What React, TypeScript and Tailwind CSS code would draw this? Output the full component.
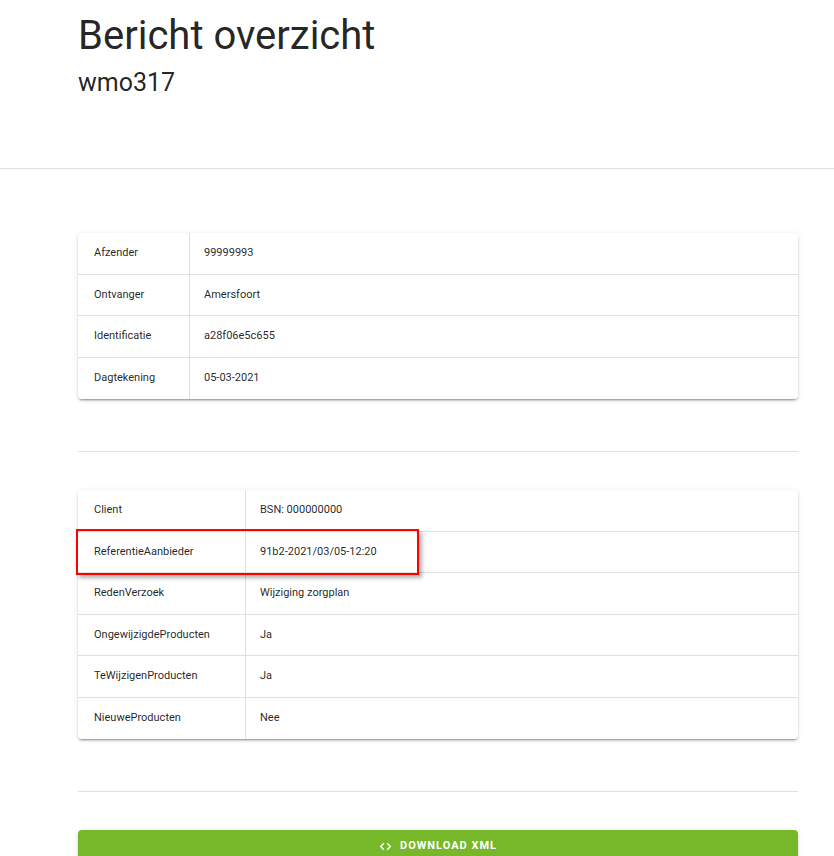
const header = [
  ['Afzender', '99999993'],
  ['Ontvanger', 'Amersfoort'],
  ['Identificatie', 'a28f06e5c655'],
  ['Dagtekening', '05-03-2021'],
];

const body = [
  ['Client', 'BSN: 000000000'],
  ['ReferentieAanbieder', '91b2-2021/03/05-12:20'],
  ['RedenVerzoek', 'Wijziging zorgplan'],
  ['OngewijzigdeProducten', 'Ja'],
  ['TeWijzigenProducten', 'Ja'],
  ['NieuweProducten', 'Nee'],
];

function InfoTable({ rows, labelWidth }: { rows: string[][]; labelWidth: string }) {
  return (
    <div className="bg-white rounded shadow-[0_3px_1px_-2px_rgba(0,0,0,0.2),0_2px_2px_0_rgba(0,0,0,0.14),0_1px_5px_0_rgba(0,0,0,0.12)]">
      {rows.map(([k, v], i) => (
        <div
          key={k}
          className={`flex h-[41.5px] text-[11px] text-black/[0.87] ${
            i < rows.length - 1 ? 'border-b border-black/[0.12]' : ''
          }`}
        >
          <div className={`${labelWidth} shrink-0 px-4 flex items-center border-r border-black/[0.12]`}>{k}</div>
          <div className="px-[14px] flex items-center">{v}</div>
        </div>
      ))}
    </div>
  );
}

export default function App() {
  return (
    <div className="min-h-screen bg-white font-['Roboto',sans-serif] text-black/[0.87]">
      {/* Title */}
      <div className="px-[78px] pt-[16px] h-[168px]">
        <h1 className="text-[40px] leading-[40px] font-normal">Bericht overzicht</h1>
        <h2 className="text-[25px] leading-[32px] mt-[11px] font-normal">wmo317</h2>
      </div>
      <hr className="border-t border-black/[0.12]" />

      <div className="pl-[78px] w-[798px]">
        <div className="pt-[64px] pb-[52px]">
          <InfoTable rows={header} labelWidth="w-[112px]" />
        </div>
        <hr className="border-t border-black/[0.12]" />

        <div className="relative pt-[38px] pb-[52px]">
          <InfoTable rows={body} labelWidth="w-[168px]" />
          {/* highlight annotation */}
          <div className="absolute left-[-2px] top-[77px] w-[343px] h-[46px] border-2 border-[#ff0000] shadow-[3px_3px_4px_rgba(0,0,0,0.3)]" />
        </div>
        <hr className="border-t border-black/[0.12]" />

        <div className="pt-[38px]">
          <button className="w-full h-[36px] rounded bg-[#76b82a] text-white text-[11px] font-bold tracking-[0.09em] uppercase flex items-center justify-center gap-[8px] pb-[3px] shadow-[0_3px_1px_-2px_rgba(0,0,0,0.2),0_2px_2px_0_rgba(0,0,0,0.14),0_1px_5px_0_rgba(0,0,0,0.12)]">
            <svg width="13" height="13" viewBox="0 0 24 24" fill="none" stroke="white" strokeWidth="2.6" strokeLinecap="square">
              <polyline points="8,7 3,12 8,17" />
              <polyline points="16,7 21,12 16,17" />
            </svg>
            Download XML
          </button>
        </div>
      </div>
    </div>
  );
}
